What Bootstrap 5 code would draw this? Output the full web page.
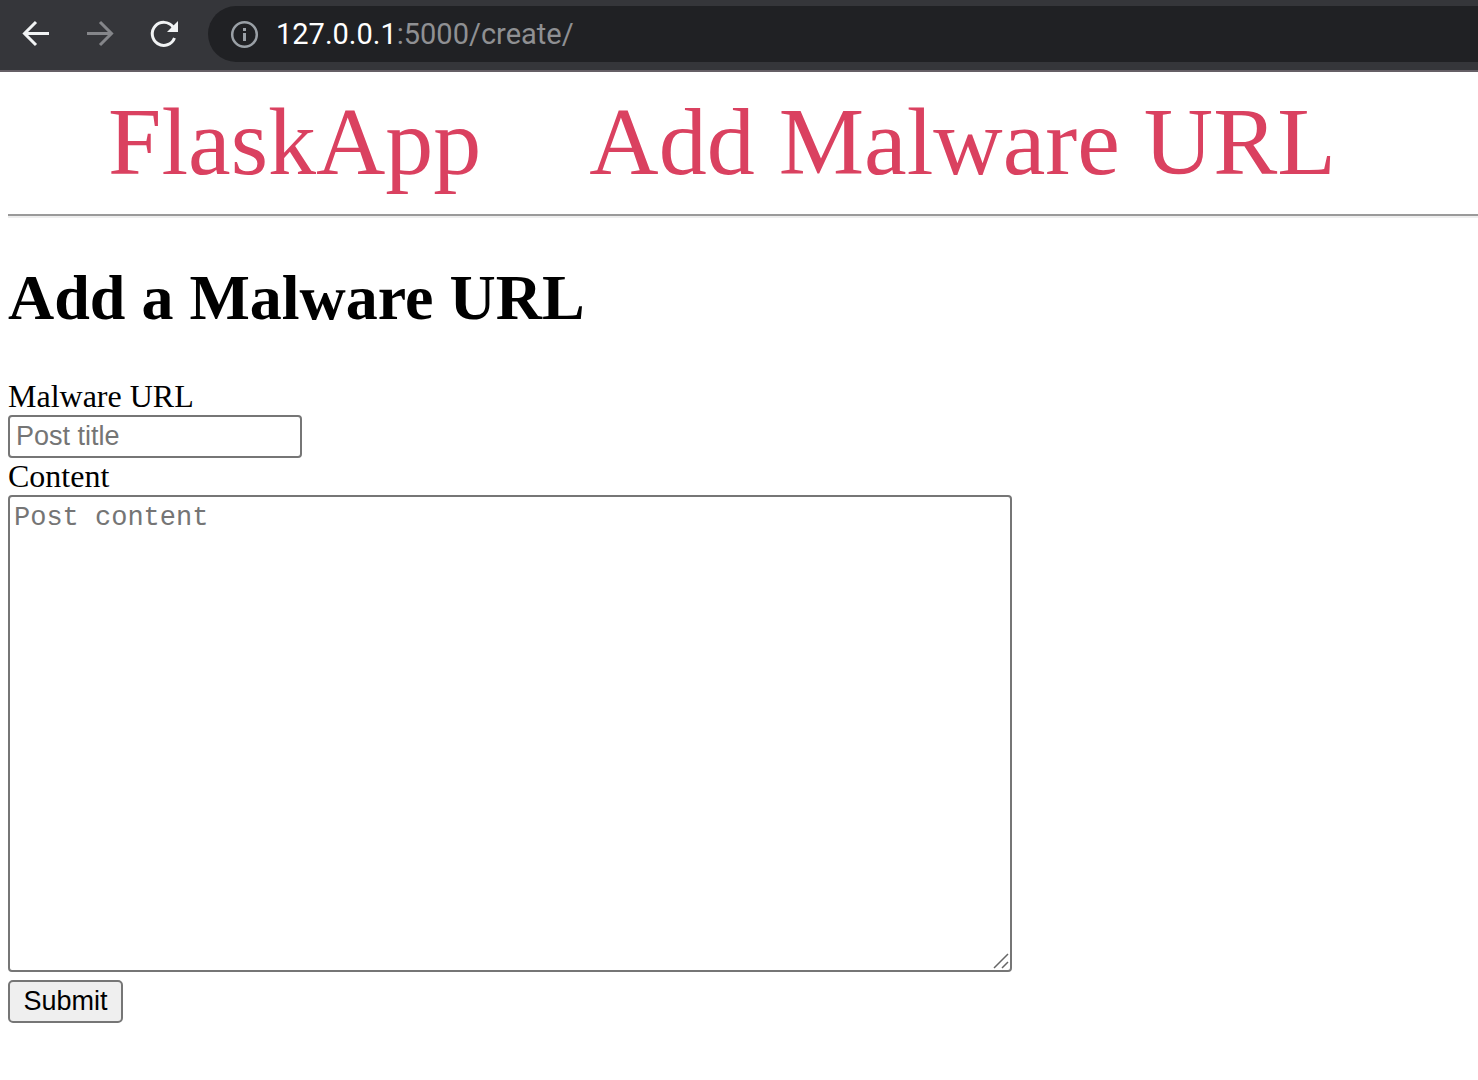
<!DOCTYPE html>
<html lang="en">
<head>
<meta charset="utf-8">
<meta name="viewport" content="width=device-width, initial-scale=1">
<title>Add a Malware URL - FlaskApp</title>
<link href="https://cdn.jsdelivr.net/npm/bootstrap@5.3.0/dist/css/bootstrap.min.css" rel="stylesheet">
<style>
body { font-family: "Liberation Serif", serif; font-size: 32px; line-height: 37px; color: #000; }
.toolbar { background: #35363a; border-bottom: 2px solid #655f66; height: 72px; padding: 6px 0 8px 20px; gap: 32px; }
.toolbar button { width: 32px; height: 32px; color: #f1f3f4; }
.toolbar button:disabled { color: #85868a; opacity: 1; }
.omnibox { background: #202124; height: 56px; border-radius: 28px 0 0 28px; padding-left: 22px; gap: 16px; margin-left: -4px; color: #9aa0a6; }
.address { font-family: Roboto, sans-serif; font-size: 29px; line-height: 36px; color: #8f9093; outline: 0; }
.address b { font-weight: 400; color: #fff; }
.page-body { padding: 16px 0 16px 8px; }
.site-nav { padding-left: 100px; gap: 108px; font-size: 96px; line-height: 108px; }
.site-nav a { color: #da4160; text-decoration: none; }
.rule { margin: 18px 0 44px; border: 0; border-top: 2px solid #9a9a9a; border-bottom: 2px solid #eee; opacity: 1; color: inherit; }
.page-title { font-size: 64px; line-height: 72px; font-weight: 700; margin-bottom: 44px; }
.field { border: 2px solid #767676; border-radius: 4px; background-color: #fff; font-size: 27px; max-width: 100%; }
.field::placeholder { color: #757575; opacity: 1; }
.field-line { font-family: "Liberation Sans", sans-serif; width: 294px; height: 43px; padding: 0 6px; }
.field-area { font-family: "Liberation Mono", monospace; line-height: 31px; width: 1004px; height: 477px; padding: 6px 4px; resize: none; margin-bottom: 8px;
  background: #fff url("data:image/svg+xml,%3Csvg xmlns='http://www.w3.org/2000/svg' width='18' height='18'%3E%3Cpath d='M2 16L16 2M10 16L16 10' stroke='%23666' stroke-width='1.5'/%3E%3C/svg%3E") no-repeat right bottom; }
.submit-btn { font-family: "Liberation Sans", sans-serif; font-size: 27px; line-height: 31px; color: #000; background: #efefef; border: 2px solid #767676; border-radius: 5px; width: 115px; height: 43px; padding: 0; }
</style>
</head>
<body class="bg-white">
<header class="toolbar d-flex align-items-center">
  <button type="button" class="btn p-0 border-0 d-flex" aria-label="Back">
    <svg width="32" height="32" viewBox="0 0 32 32" fill="none" stroke="currentColor" stroke-width="3"><path d="M29 15.500H5M16 4L4.500 15.500L16 27"/></svg>
  </button>
  <button type="button" class="btn p-0 border-0 d-flex" aria-label="Forward" disabled>
    <svg width="32" height="32" viewBox="0 0 32 32" fill="none" stroke="currentColor" stroke-width="3"><path d="M3 15.500H27M16 4L27.500 15.500L16 27"/></svg>
  </button>
  <button type="button" class="btn p-0 border-0 d-flex" aria-label="Reload">
    <svg width="32" height="32" viewBox="0 0 32 32"><path d="M26.500 20A11.500 11.500 0 1 1 25 9" fill="none" stroke="currentColor" stroke-width="3"/><path d="M30 3V14H19z" fill="currentColor"/></svg>
  </button>
  <div class="omnibox d-flex align-items-center flex-grow-1">
    <svg width="30" height="30" viewBox="0 0 30 30" aria-hidden="true"><circle cx="14.500" cy="15.500" r="12.300" fill="none" stroke="currentColor" stroke-width="2.500"/><path d="M13 9h3v3h-3zM13 14h3v8h-3z" fill="currentColor"/></svg>
    <div class="address" role="textbox" contenteditable="true" spellcheck="false" aria-label="Address"><b>127.0.0.1</b>:5000/create/</div>
  </div>
</header>
<main class="page-body">
  <nav class="site-nav d-flex flex-wrap">
    <a href="#">FlaskApp</a>
    <a href="#">Add Malware URL</a>
  </nav>
  <hr class="rule">
  <h1 class="page-title">Add a Malware URL</h1>
  <form>
    <label class="d-block" for="title">Malware URL</label>
    <input class="field field-line d-block" type="text" id="title" name="title" placeholder="Post title">
    <label class="d-block" for="content">Content</label>
    <textarea class="field field-area d-block" id="content" name="content" placeholder="Post content"></textarea>
    <button class="submit-btn" type="submit">Submit</button>
  </form>
</main>
<script src="https://cdn.jsdelivr.net/npm/bootstrap@5.3.0/dist/js/bootstrap.bundle.min.js"></script>
</body>
</html>
